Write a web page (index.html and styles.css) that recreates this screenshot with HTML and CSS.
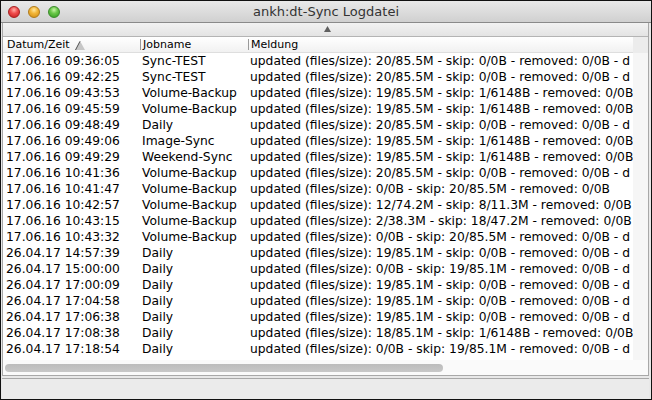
FILE: index.html
```html
<!DOCTYPE html>
<html lang="de">
<head>
<meta charset="utf-8">
<title>ankh:dt-Sync Logdatei</title>
<link rel="stylesheet" href="styles.css">
</head>
<body>
<div class="window">
  <div class="titlebar">
    <div class="lights">
      <span class="light red"></span>
      <span class="light yellow"></span>
      <span class="light green"></span>
    </div>
    <div class="title">ankh:dt-Sync Logdatei</div>
    <div></div>
  </div>
  <div class="content">
    <div class="pane">
      <div class="splitter">
        <svg class="split-arrow" width="7" height="6" viewBox="0 0 7 6"><polygon points="3.5,0 7,6 0,6" fill="#606060"/></svg>
      </div>
      <div class="scroll">
        <div class="main">
          <div class="table">
            <div class="thead">
              <div class="hcell c1">Datum/Zeit
                <svg class="sort" width="10" height="9" viewBox="0 0 10 9"><polygon points="5,0 10,9 0,9" fill="#c6c6c6"/><line x1="0.5" y1="9" x2="5" y2="0.3" stroke="#555" stroke-width="1"/></svg>
              </div>
              <div class="hcell c2"><span class="sep"></span>Jobname</div>
              <div class="hcell c3"><span class="sep"></span>Meldung</div>
            </div>
            <div class="tbody">
              <div class="row"><div class="cell c1">17.06.16 09:36:05</div><div class="cell c2">Sync-TEST</div><div class="cell c3">updated (files/size): 20/85.5M - skip: 0/0B - removed: 0/0B - d</div></div>
              <div class="row"><div class="cell c1">17.06.16 09:42:25</div><div class="cell c2">Sync-TEST</div><div class="cell c3">updated (files/size): 20/85.5M - skip: 0/0B - removed: 0/0B - d</div></div>
              <div class="row"><div class="cell c1">17.06.16 09:43:53</div><div class="cell c2">Volume-Backup</div><div class="cell c3">updated (files/size): 19/85.5M - skip: 1/6148B - removed: 0/0B</div></div>
              <div class="row"><div class="cell c1">17.06.16 09:45:59</div><div class="cell c2">Volume-Backup</div><div class="cell c3">updated (files/size): 19/85.5M - skip: 1/6148B - removed: 0/0B</div></div>
              <div class="row"><div class="cell c1">17.06.16 09:48:49</div><div class="cell c2">Daily</div><div class="cell c3">updated (files/size): 20/85.5M - skip: 0/0B - removed: 0/0B - d</div></div>
              <div class="row"><div class="cell c1">17.06.16 09:49:06</div><div class="cell c2">Image-Sync</div><div class="cell c3">updated (files/size): 19/85.5M - skip: 1/6148B - removed: 0/0B</div></div>
              <div class="row"><div class="cell c1">17.06.16 09:49:29</div><div class="cell c2">Weekend-Sync</div><div class="cell c3">updated (files/size): 19/85.5M - skip: 1/6148B - removed: 0/0B</div></div>
              <div class="row"><div class="cell c1">17.06.16 10:41:36</div><div class="cell c2">Volume-Backup</div><div class="cell c3">updated (files/size): 20/85.5M - skip: 0/0B - removed: 0/0B - d</div></div>
              <div class="row"><div class="cell c1">17.06.16 10:41:47</div><div class="cell c2">Volume-Backup</div><div class="cell c3">updated (files/size): 0/0B - skip: 20/85.5M - removed: 0/0B</div></div>
              <div class="row"><div class="cell c1">17.06.16 10:42:57</div><div class="cell c2">Volume-Backup</div><div class="cell c3">updated (files/size): 12/74.2M - skip: 8/11.3M - removed: 0/0B</div></div>
              <div class="row"><div class="cell c1">17.06.16 10:43:15</div><div class="cell c2">Volume-Backup</div><div class="cell c3">updated (files/size): 2/38.3M - skip: 18/47.2M - removed: 0/0B</div></div>
              <div class="row"><div class="cell c1">17.06.16 10:43:32</div><div class="cell c2">Volume-Backup</div><div class="cell c3">updated (files/size): 0/0B - skip: 20/85.5M - removed: 0/0B - d</div></div>
              <div class="row"><div class="cell c1">26.04.17 14:57:39</div><div class="cell c2">Daily</div><div class="cell c3">updated (files/size): 19/85.1M - skip: 0/0B - removed: 0/0B - d</div></div>
              <div class="row"><div class="cell c1">26.04.17 15:00:00</div><div class="cell c2">Daily</div><div class="cell c3">updated (files/size): 0/0B - skip: 19/85.1M - removed: 0/0B - d</div></div>
              <div class="row"><div class="cell c1">26.04.17 17:00:09</div><div class="cell c2">Daily</div><div class="cell c3">updated (files/size): 19/85.1M - skip: 0/0B - removed: 0/0B - d</div></div>
              <div class="row"><div class="cell c1">26.04.17 17:04:58</div><div class="cell c2">Daily</div><div class="cell c3">updated (files/size): 19/85.1M - skip: 0/0B - removed: 0/0B - d</div></div>
              <div class="row"><div class="cell c1">26.04.17 17:06:38</div><div class="cell c2">Daily</div><div class="cell c3">updated (files/size): 19/85.1M - skip: 0/0B - removed: 0/0B - d</div></div>
              <div class="row"><div class="cell c1">26.04.17 17:08:38</div><div class="cell c2">Daily</div><div class="cell c3">updated (files/size): 18/85.1M - skip: 1/6148B - removed: 0/0B</div></div>
              <div class="row"><div class="cell c1">26.04.17 17:18:54</div><div class="cell c2">Daily</div><div class="cell c3">updated (files/size): 0/0B - skip: 19/85.1M - removed: 0/0B - d</div></div>
            </div>
          </div>
          <div class="vtrack"><div class="vtrack-head"></div></div>
        </div>
        <div class="hbar"><div class="thumb"></div></div>
      </div>
    </div>
    <div class="status"></div>
  </div>
</div>
</body>
</html>
```

FILE: styles.css
```css
* { box-sizing: border-box; }
html, body { margin: 0; padding: 0; }
body {
  width: 652px;
  height: 400px;
  overflow: hidden;
  background: #000;
  font-family: "DejaVu Sans", "Liberation Sans", sans-serif;
}
.window {
  width: 652px;
  height: 400px;
  border: 1px solid #111;
  display: flex;
  flex-direction: column;
  background: #e8e8e8;
}
.titlebar {
  height: 22px;
  flex: none;
  display: grid;
  grid-template-columns: 1fr auto 1fr;
  align-items: center;
  background: linear-gradient(#e9e9e9, #d0d0d0);
  border-bottom: 1px solid #8a8a8a;
}
.lights {
  display: flex;
  gap: 8px;
  padding-left: 7px;
  padding-top: 1px;
}
.light {
  width: 12px;
  height: 12px;
  border-radius: 50%;
  display: block;
}
.red {
  background: radial-gradient(circle at 50% 30%, #ffb0a8 0%, #f05050 40%, #c41a1a 100%);
  border: 1px solid #a52020;
}
.yellow {
  background: radial-gradient(circle at 50% 30%, #ffe8a0 0%, #f3b73a 40%, #cf8a10 100%);
  border: 1px solid #b07a1a;
}
.green {
  background: radial-gradient(circle at 50% 30%, #c8f5a8 0%, #6cc84a 40%, #2e9a1c 100%);
  border: 1px solid #3a8a2a;
}
.title {
  font-size: 13px;
  color: #333;
  line-height: 21px;
  white-space: nowrap;
}
.content {
  flex: 1;
  display: flex;
  flex-direction: column;
  padding: 0 2px 0 1px;
}
.pane {
  flex: 1;
  display: flex;
  flex-direction: column;
  border-left: 1px solid #a8a8a8;
  border-right: 1px solid #a8a8a8;
  border-bottom: 1px solid #a8a8a8;
  margin-bottom: 2px;
}
.splitter {
  height: 14px;
  flex: none;
  display: flex;
  justify-content: center;
  align-items: flex-start;
  padding-top: 3px;
  background: linear-gradient(#f2f2f2, #e4e4e4);
  border-bottom: 1px solid #b4b4b4;
}
.split-arrow { display: block; margin-left: 3px; }
.scroll {
  flex: 1;
  display: flex;
  flex-direction: column;
  background: #fff;
}
.main {
  flex: 1;
  display: flex;
  min-height: 0;
}
.table {
  width: 630px;
  flex: none;
  overflow: hidden;
}
.thead {
  display: grid;
  grid-template-columns: 137px 108px 1fr;
  height: 16px;
  background: linear-gradient(#ffffff, #f1f1f1);
  border-bottom: 1px solid #dedede;
  font-size: 11px;
  color: #000;
}
.hcell {
  display: flex;
  align-items: center;
  white-space: nowrap;
  line-height: 15px;
}
.hcell.c1 { padding-left: 4px; }
.sep {
  display: block;
  width: 1px;
  height: 11px;
  background: #9a9a9a;
  margin-right: 2px;
}
.sort { display: block; margin-left: 5px; margin-top: 1px; }
.row {
  display: grid;
  grid-template-columns: 137px 108px 1fr;
  height: 16px;
  font-size: 12.3px;
  line-height: 16px;
  color: #000;
}
.cell {
  white-space: nowrap;
  overflow: hidden;
}
.cell.c1 { padding-left: 3px; }
.cell.c2 { padding-left: 2px; }
.cell.c3 { padding-left: 2px; }
.vtrack {
  flex: 1;
  background: #f6f6f6;
}
.vtrack-head {
  height: 16px;
  background: #ececec;
}
.hbar {
  height: 15px;
  flex: none;
  padding: 4px 0 3px 2px;
  background: #fafafa;
}
.thumb {
  width: 438px;
  height: 8px;
  border-radius: 4px;
  background: linear-gradient(#bcbcbc, #c8c8c8);
}
.status {
  height: 21px;
  flex: none;
  border-top: 1px solid #a8a8a8;
  background: #ebebeb;
}
```
